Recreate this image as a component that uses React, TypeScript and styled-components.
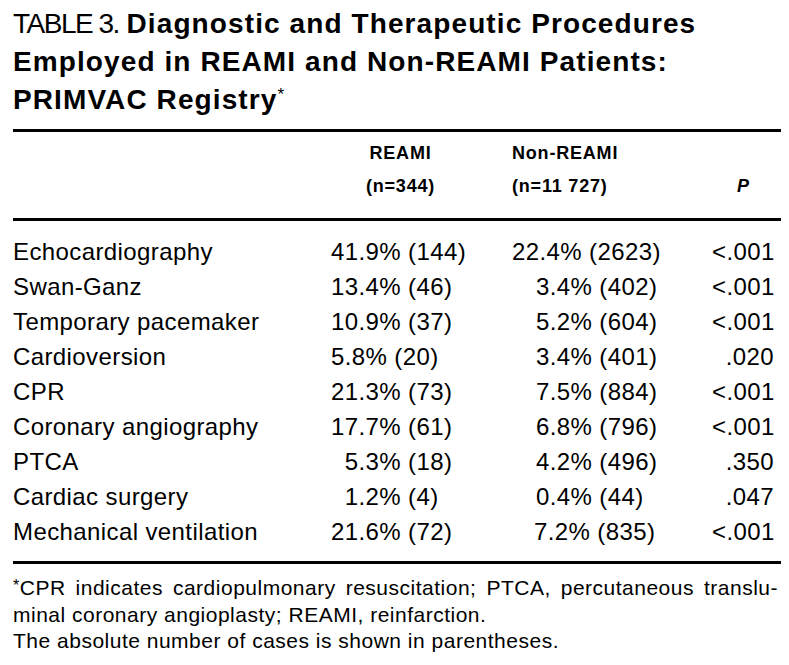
import styled, { createGlobalStyle } from "styled-components";

const GlobalStyle = createGlobalStyle`
  html, body {
    margin: 0;
    padding: 0;
    background: #fff;
  }
  body {
    font-family: "Liberation Sans", Arial, sans-serif;
    color: #000;
  }
`;

interface ProcedureRow {
  label: string;
  reami: string;
  nonReami: string;
  p: string;
  indent: number; // 비-REAMI 열 들여쓰기
}

const FS = "\u2007"; // figure space

const rows: ProcedureRow[] = [
  { label: "Echocardiography", reami: "41.9% (144)", nonReami: "22.4% (2623)", p: "<.001", indent: 0 },
  { label: "Swan-Ganz", reami: "13.4% (46)", nonReami: "3.4% (402)", p: "<.001", indent: 24 },
  { label: "Temporary pacemaker", reami: "10.9% (37)", nonReami: "5.2% (604)", p: "<.001", indent: 24 },
  { label: "Cardioversion", reami: "5.8% (20)", nonReami: "3.4% (401)", p: ".020", indent: 24 },
  { label: "CPR", reami: "21.3% (73)", nonReami: "7.5% (884)", p: "<.001", indent: 24 },
  { label: "Coronary angiography", reami: "17.7% (61)", nonReami: "6.8% (796)", p: "<.001", indent: 24 },
  { label: "PTCA", reami: FS + "5.3% (18)", nonReami: "4.2% (496)", p: ".350", indent: 24 },
  { label: "Cardiac surgery", reami: FS + "1.2% (4)", nonReami: "0.4% (44)", p: ".047", indent: 24 },
  { label: "Mechanical ventilation", reami: "21.6% (72)", nonReami: "7.2% (835)", p: "<.001", indent: 22 },
];

function App() {
  return (
    <>
      <GlobalStyle />
      <Page>
        <Title>
          <Label>TABLE 3.</Label>{" "}
          <Strong>
            Diagnostic and Therapeutic Procedures
            <br />
            Employed in REAMI and Non-REAMI Patients:
            <br />
            PRIMVAC Registry
          </Strong>
          <Star>*</Star>
        </Title>

        <Rule $top={10} />

        <HeadRow>
          <span />
          <HeadCell $align="center" $width={139}>
            REAMI
            <br />
            (n=344)
          </HeadCell>
          <HeadCell $align="left">
            Non-REAMI
            <br />
            (n=11 727)
          </HeadCell>
          <HeadCell $align="center">
            <br />
            <em>P</em>
          </HeadCell>
        </HeadRow>

        <Rule />

        <Body>
          {rows.map((row) => (
            <DataRow key={row.label}>
              <Cell>{row.label}</Cell>
              <Cell>{row.reami}</Cell>
              <Cell $indent={row.indent}>{row.nonReami}</Cell>
              <Cell $align="right">{row.p}</Cell>
            </DataRow>
          ))}
        </Body>

        <Rule />

        <Notes>
          <JustifiedLine>
            <NoteStar>*</NoteStar>CPR indicates cardiopulmonary resuscitation; PTCA, percutaneous translu-
          </JustifiedLine>
          <NoteLine>minal coronary angioplasty; REAMI, reinfarction.</NoteLine>
          <NoteLine>The absolute number of cases is shown in parentheses.</NoteLine>
        </Notes>
      </Page>
    </>
  );
}

const Page = styled.div`
  width: 768px;
  padding: 5px 8px 0 13px;
  display: flex;
  flex-direction: column;
`;

const Title = styled.h1`
  margin: 0;
  font-size: 28px;
  line-height: 38px;
  font-weight: normal;
`;

const Label = styled.span`
  letter-spacing: -1.5px;
`;

const Strong = styled.span`
  font-weight: bold;
  letter-spacing: 1.1px;
`;

const Star = styled.sup`
  font-size: 17px;
  font-weight: normal;
  vertical-align: 9px;
  line-height: 0;
`;

const Rule = styled.div<{ $top?: number }>`
  height: 3px;
  background: #000;
  margin-top: ${(p) => p.$top ?? 0}px;
`;

const grid = `
  display: grid;
  grid-template-columns: 318px 181px 1fr 62px;
  padding-right: 7px;
`;

const HeadRow = styled.div`
  ${grid}
  padding-top: 5px;
  padding-bottom: 15px;
`;

const HeadCell = styled.div<{ $align: "left" | "center"; $width?: number }>`
  font-size: 18px;
  line-height: 33px;
  font-weight: bold;
  letter-spacing: 0.8px;
  text-align: ${(p) => p.$align};
  width: ${(p) => (p.$width ? `${p.$width}px` : "auto")};

  em {
    font-style: italic;
    letter-spacing: 0;
  }
`;

const Body = styled.div`
  padding-top: 13px;
  padding-bottom: 12px;
`;

const DataRow = styled.div`
  ${grid}
`;

const Cell = styled.div<{ $indent?: number; $align?: "left" | "right" }>`
  font-size: 24px;
  line-height: 35px;
  letter-spacing: 0.4px;
  white-space: pre;
  padding-left: ${(p) => p.$indent ?? 0}px;
  text-align: ${(p) => p.$align ?? "left"};
`;

const Notes = styled.div`
  padding-top: 9px;
  padding-right: 3px;
  font-size: 21px;
  line-height: 26.5px;
  letter-spacing: 0.5px;
`;

const NoteLine = styled.div``;

const JustifiedLine = styled.div`
  text-align: justify;
  text-align-last: justify;
`;

const NoteStar = styled.span`
  font-size: 16px;
  vertical-align: 4px;
`;

export default App;
